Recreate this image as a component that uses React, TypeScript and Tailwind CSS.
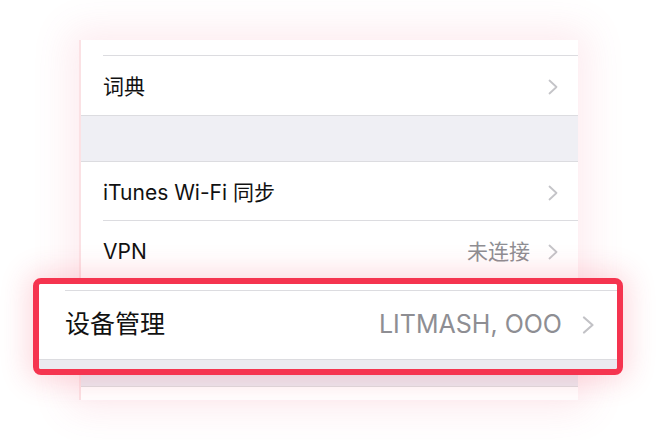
import React from 'react';

const font = "font-['Inter','Noto_Sans_CJK_SC',sans-serif]";

function Chevron({ big }: { big?: boolean }) {
  return big ? (
    <svg width="13" height="18" viewBox="0 0 13 18" className="shrink-0">
      <polyline points="2,1.5 10.5,9 2,16.5" fill="none" stroke="#c2c2c6" strokeWidth="2.2" strokeLinecap="round" strokeLinejoin="round" />
    </svg>
  ) : (
    <svg width="10" height="16" viewBox="0 0 10 16" className="shrink-0">
      <polyline points="1.5,1.5 8.5,8 1.5,14.5" fill="none" stroke="#c4c4c8" strokeWidth="1.8" strokeLinecap="round" strokeLinejoin="round" />
    </svg>
  );
}

function Row({ label, value, last }: { label?: string; value?: string; last?: boolean }) {
  return (
    <div className="bg-white pl-[22px]">
      <div className={`flex items-center h-[59px] pt-[3px] pr-[20px] ${last ? '' : 'border-b border-[#dcdce0]'}`}>
        <span className="flex-1 text-[21px] text-[#111]">{label}</span>
        {value && <span className="text-[21px] text-[#8e8e93] mr-[18px]">{value}</span>}
        {label && <Chevron />}
      </div>
    </div>
  );
}

export default function App() {
  return (
    <div className={`relative w-[657px] h-[440px] bg-white overflow-hidden ${font}`}>
      {/* Settings panel */}
      <div className="ml-[79px] mt-[40px] w-[499px] h-[360px] bg-white border-l-2 border-[#fbe1e4] shadow-[0_0_36px_10px_rgba(240,90,120,0.12)] overflow-hidden">
        <div className="h-[15px] bg-white" />
        <div className="pl-[22px] bg-white">
          <div className="border-t border-[#dcdce0]" />
        </div>
        <Row label="词典" last />
        <div className="h-[47px] bg-[#efeff4] border-y border-[#dcdce0]" />
        <Row label="iTunes Wi-Fi 同步" />
        <Row label="VPN" value="未连接" />
        {/* row hidden under the magnified highlight */}
        <Row last />
        <div className="h-[48px] bg-[#ebeaf0] border-y border-[#dcdce0]" />
        <div className="h-[20px] bg-white" />
      </div>

      {/* Magnified highlight */}
      <div className="absolute left-[33px] top-[278px] w-[590px] h-[97px] rounded-[8px] border-[6px] border-[#f5344f] bg-white overflow-hidden shadow-[0_0_28px_6px_rgba(245,52,79,0.18)]">
        <div className="h-[6px] bg-white" />
        <div className="pl-[26px]">
          <div className="flex items-center h-[69px] pr-[22px] border-t border-[#dcdce0]">
            <span className="flex-1 text-[25px] text-[#111]">设备管理</span>
            <span className="text-[25px] text-[#8e8e93] mr-[20px]">LITMASH, OOO</span>
            <Chevron big />
          </div>
        </div>
        <div className="h-[10px] bg-[#ebeaf0] border-t border-[#dcdce0]" />
      </div>
    </div>
  );
}
